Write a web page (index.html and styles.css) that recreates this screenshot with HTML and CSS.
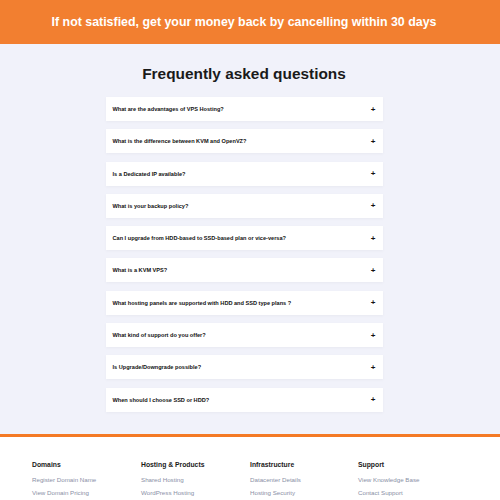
FILE: index.html
```html
<!DOCTYPE html>
<html lang="en">
<head>
    <meta charset="UTF-8">
    <meta name="viewport" content="width=device-width, initial-scale=1.0">
    <title>FAQ</title>
    <link rel="stylesheet" href="styles.css">
</head>
<body>
    <div id="banner">
        <p>If not satisfied, get your money back by cancelling within 30 days</p>
    </div>
    <div id="faq">
        <h2>Frequently asked questions</h2>
        <div class="faq-list">
            <div class="faq-item"><span>What are the advantages of VPS Hosting?</span><span class="plus">+</span></div>
            <div class="faq-item"><span>What is the difference between KVM and OpenVZ?</span><span class="plus">+</span></div>
            <div class="faq-item"><span>Is a Dedicated IP available?</span><span class="plus">+</span></div>
            <div class="faq-item"><span>What is your backup policy?</span><span class="plus">+</span></div>
            <div class="faq-item"><span>Can I upgrade from HDD-based to SSD-based plan or vice-versa?</span><span class="plus">+</span></div>
            <div class="faq-item"><span>What is a KVM VPS?</span><span class="plus">+</span></div>
            <div class="faq-item"><span>What hosting panels are supported with HDD and SSD type plans ?</span><span class="plus">+</span></div>
            <div class="faq-item"><span>What kind of support do you offer?</span><span class="plus">+</span></div>
            <div class="faq-item"><span>Is Upgrade/Downgrade possible?</span><span class="plus">+</span></div>
            <div class="faq-item"><span>When should I choose SSD or HDD?</span><span class="plus">+</span></div>
        </div>
    </div>
    <div id="footer">
        <div class="footer-col">
            <h4>Domains</h4>
            <a href="#">Register Domain Name</a>
            <a href="#">View Domain Pricing</a>
        </div>
        <div class="footer-col">
            <h4>Hosting &amp; Products</h4>
            <a href="#">Shared Hosting</a>
            <a href="#">WordPress Hosting</a>
        </div>
        <div class="footer-col">
            <h4>Infrastructure</h4>
            <a href="#">Datacenter Details</a>
            <a href="#">Hosting Security</a>
        </div>
        <div class="footer-col">
            <h4>Support</h4>
            <a href="#">View Knowledge Base</a>
            <a href="#">Contact Support</a>
        </div>
    </div>
</body>
</html>
```

FILE: styles.css
```css
body {
    font-family: 'Liberation Sans', Arial, sans-serif;
    margin: 0;
    padding: 0;
    background-color: #f1f2fa;
    color: #111;
}
#banner {
    background-color: #f27f30;
    height: 44px;
    padding-right: 12px;
    display: flex;
    align-items: center;
    justify-content: center;
}
#banner p {
    margin: 0;
    color: white;
    font-size: 12.4px;
    font-weight: bold;
}
#faq {
    padding: 20px 12px 22px 0;
    display: flex;
    flex-direction: column;
    align-items: center;
    border-bottom: 3px solid #f47a25;
}
#faq h2 {
    margin: 0 0 13px;
    font-size: 15.4px;
    line-height: 20px;
    font-weight: bold;
    color: #1a1a1a;
}
.faq-list {
    width: 277px;
    display: flex;
    flex-direction: column;
    gap: 8.3px;
}
.faq-item {
    background-color: white;
    height: 24px;
    padding: 0 7px;
    display: flex;
    align-items: center;
    justify-content: space-between;
    font-size: 5.6px;
    font-weight: bold;
    box-shadow: 0 1px 3px rgba(0, 0, 0, 0.04);
}
.plus {
    font-size: 8px;
    font-weight: bold;
    margin-right: 0;
}
#footer {
    background-color: white;
    display: grid;
    grid-template-columns: 109px 109px 108px 108px;
    padding: 24px 0 0 32px;
    height: 61px;
}
.footer-col {
    display: flex;
    flex-direction: column;
}
.footer-col h4 {
    margin: 0 0 8px;
    font-size: 6.8px;
    font-weight: bold;
    color: #1a1a1a;
}
.footer-col a {
    font-size: 6.2px;
    color: #8a90a6;
    text-decoration: none;
    margin-bottom: 6px;
}
```
